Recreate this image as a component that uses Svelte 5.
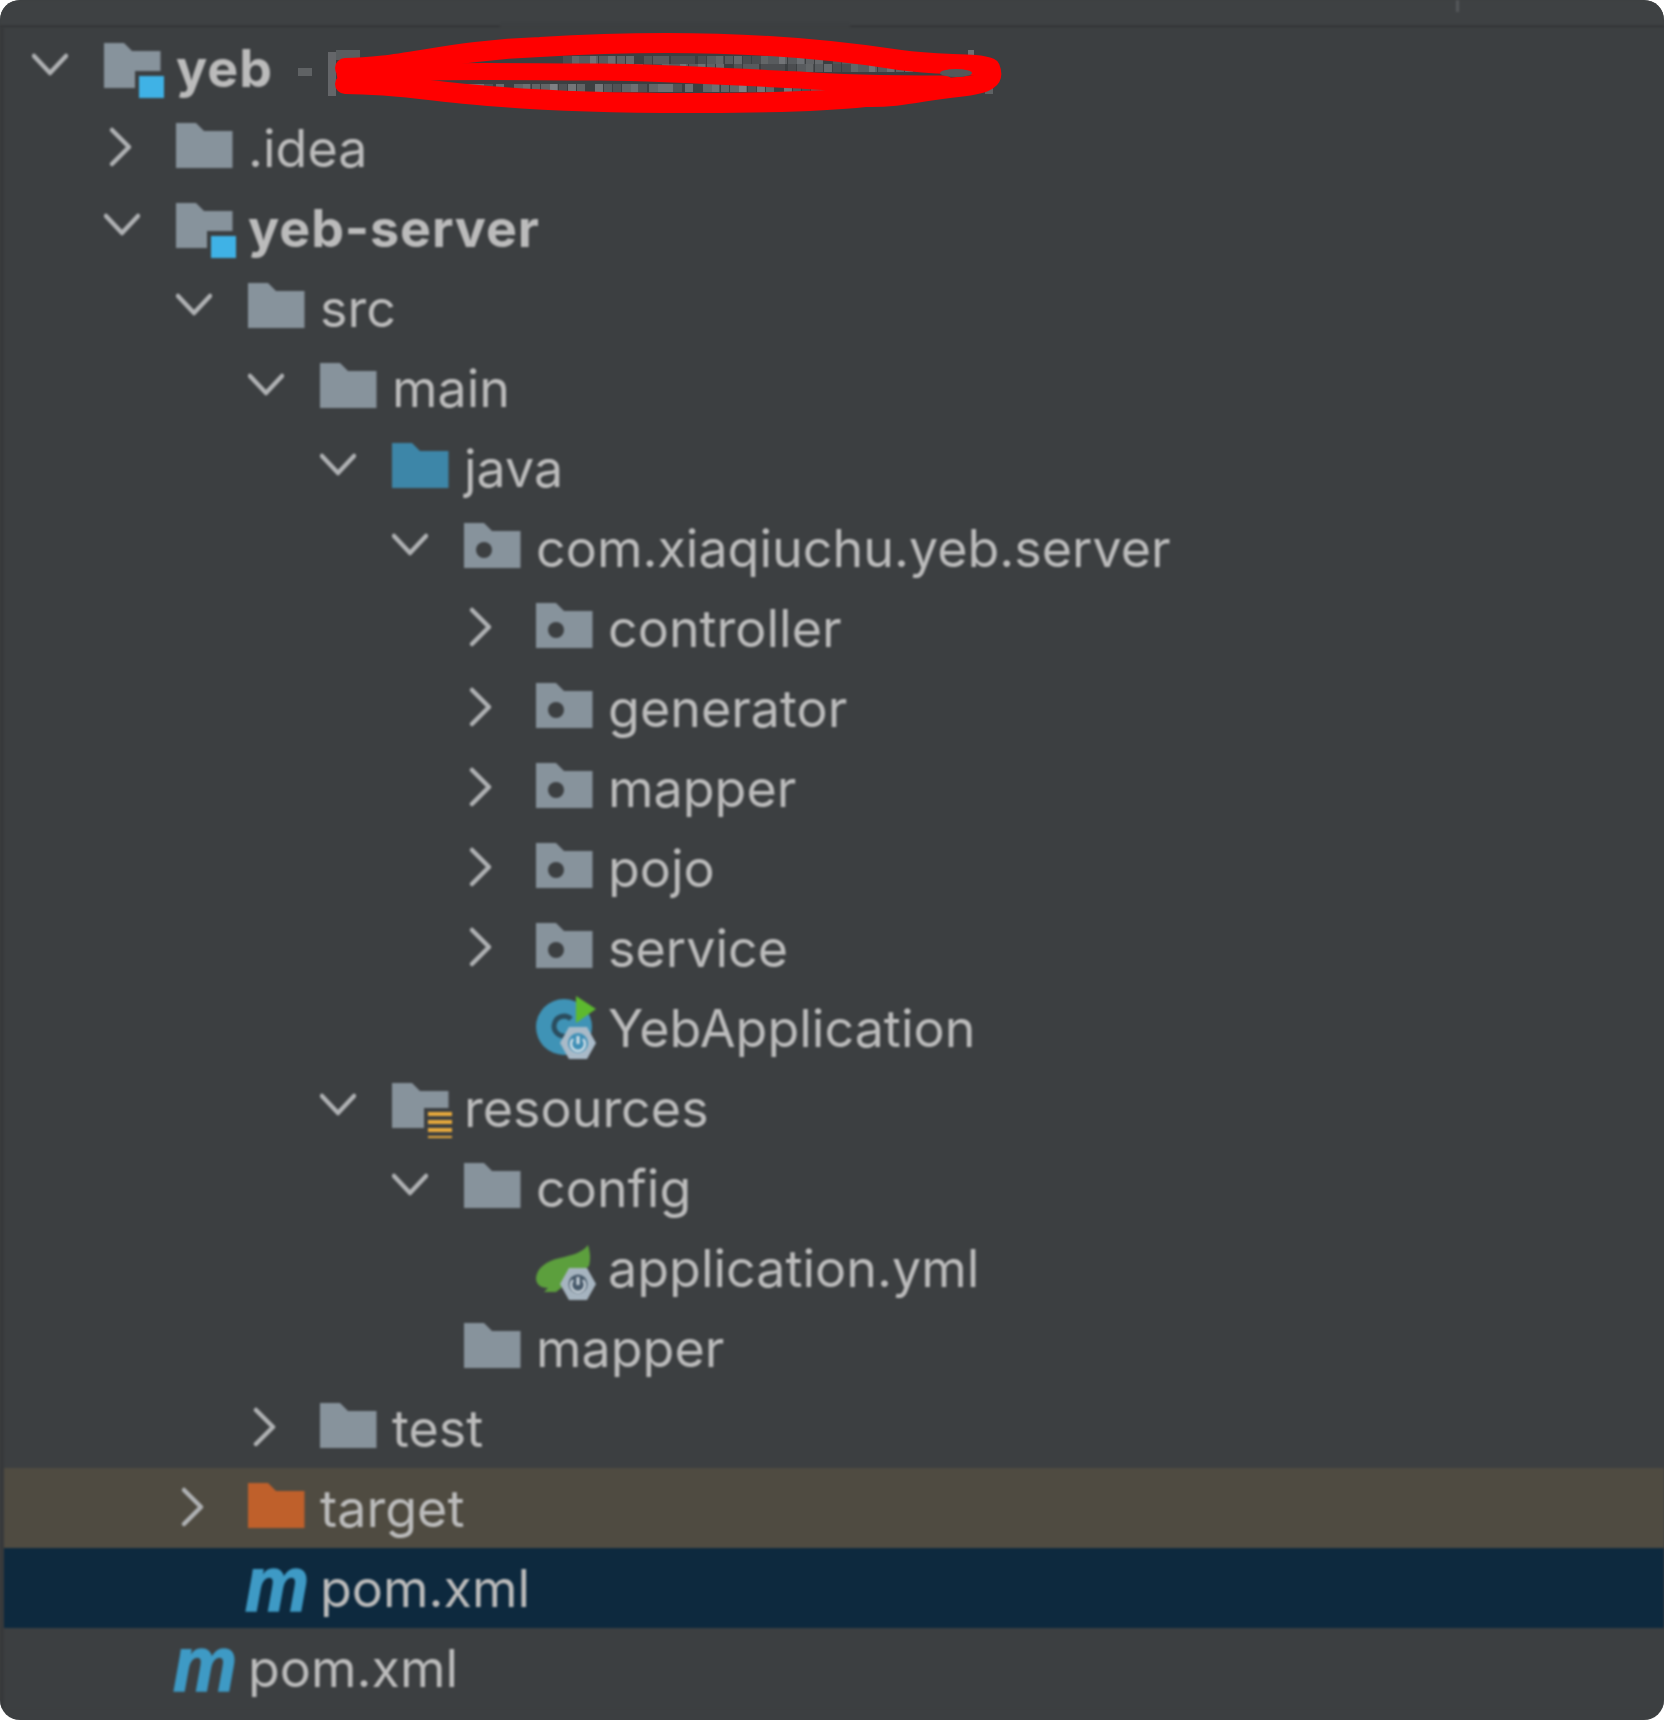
<script>
  const rows = [
    { label: 'yeb', level: 0, chev: 'down', icon: 'module', bold: true },
    { label: '.idea', level: 1, chev: 'right', icon: 'folder' },
    { label: 'yeb-server', level: 1, chev: 'down', icon: 'module', bold: true },
    { label: 'src', level: 2, chev: 'down', icon: 'folder' },
    { label: 'main', level: 3, chev: 'down', icon: 'folder' },
    { label: 'java', level: 4, chev: 'down', icon: 'java' },
    { label: 'com.xiaqiuchu.yeb.server', level: 5, chev: 'down', icon: 'package' },
    { label: 'controller', level: 6, chev: 'right', icon: 'package' },
    { label: 'generator', level: 6, chev: 'right', icon: 'package' },
    { label: 'mapper', level: 6, chev: 'right', icon: 'package' },
    { label: 'pojo', level: 6, chev: 'right', icon: 'package' },
    { label: 'service', level: 6, chev: 'right', icon: 'package' },
    { label: 'YebApplication', level: 6, icon: 'boot' },
    { label: 'resources', level: 4, chev: 'down', icon: 'resources' },
    { label: 'config', level: 5, chev: 'down', icon: 'folder' },
    { label: 'application.yml', level: 6, icon: 'yaml' },
    { label: 'mapper', level: 5, icon: 'folder' },
    { label: 'test', level: 3, chev: 'right', icon: 'folder' },
    { label: 'target', level: 2, chev: 'right', icon: 'target', tone: 'excluded' },
    { label: 'pom.xml', level: 2, icon: 'maven', tone: 'selected' },
    { label: 'pom.xml', level: 1, icon: 'maven' }
  ];

  const blocks = [
    { x: 298, y: 68, w: 14, h: 8, o: 0.35 },
    { x: 328, y: 52, w: 8, h: 44, o: 0.4 },
    { x: 336, y: 50, w: 24, h: 10, o: 0.3 },
    { x: 905, y: 52, w: 10, h: 8, o: 0.3 },
    { x: 968, y: 50, w: 6, h: 8, o: 0.5 },
    { x: 985, y: 86, w: 8, h: 8, o: 0.35 },
    { x: 915, y: 94, w: 10, h: 6, o: 0.3 }
  ];
  const widths = [8, 8, 8, 16, 8, 24, 8, 16, 8, 8, 16, 8];
  let seed = 7;
  function next() {
    seed = (seed * 73 + 41) % 211;
    return seed;
  }
  for (let x = 563; x < 938; x += 9) {
    for (const y of [56, 64]) {
      const n = next();
      if (n % 3 !== 0) {
        blocks.push({ x, y, w: widths[n % widths.length], h: 8, o: 0.15 + (n % 5) * 0.07 });
      }
    }
  }
  for (let x = 442; x < 837; x += 9) {
    const n = next();
    if (n % 3 !== 0) {
      blocks.push({ x, y: 84, w: widths[n % widths.length], h: 8, o: 0.2 + (n % 5) * 0.09 });
    }
  }
  const folder = 'M0 5H20L28 13H56.500V50H0Z';
</script>

<div class="window">
  <div class="titlebar"><span class="tick"></span><span class="bump"></span></div>
  <div class="tree">
    {#each rows as row}
      <div class="row {row.tone ?? ''}" style="padding-left: {28 + row.level * 72}px">
        <span class="chevron">
          {#if row.chev === 'down'}
            <svg width="36" height="60" viewBox="0 0 36 60"><path d="M2 18L18 35L34 18" /></svg>
          {:else if row.chev === 'right'}
            <svg width="36" height="60" viewBox="0 0 36 60"><path d="M8 12L25 29L8 46" /></svg>
          {/if}
        </span>
        <span class="icon">
          {#if row.icon === 'folder'}
            <svg width="60" height="60" viewBox="0 0 60 60"><path d={folder} fill="#87939c" /></svg>
          {:else if row.icon === 'java'}
            <svg width="60" height="60" viewBox="0 0 60 60"><path d={folder} fill="#3d86a8" /></svg>
          {:else if row.icon === 'target'}
            <svg width="60" height="60" viewBox="0 0 60 60"><path d={folder} fill="#bf602b" /></svg>
          {:else if row.icon === 'package'}
            <svg width="60" height="60" viewBox="0 0 60 60">
              <path d={folder} fill="#87939c" /><circle cx="20" cy="32" r="8" fill="#3c3f41" />
            </svg>
          {:else if row.icon === 'module'}
            <svg width="60" height="60" viewBox="0 0 60 60">
              <path d="M0 5H20L28 13H56.500V33H31V50H0Z" fill="#87939c" />
              <rect x="35" y="38" width="25" height="24" fill="#3fb2e6" />
            </svg>
          {:else if row.icon === 'resources'}
            <svg width="60" height="60" viewBox="0 0 60 60">
              <path d="M0 5H20L28 13H56.500V30H32V50H0Z" fill="#87939c" />
              <path d="M36 36H60M36 44H60M36 52H60M36 60H60" stroke="#e8aa3c" stroke-width="4" />
            </svg>
          {:else if row.icon === 'boot'}
            <svg class="free" width="60" height="60" viewBox="0 0 60 60">
              <circle cx="28" cy="29" r="28" fill="#3f93b6" />
              <path d="M35 21A10 10 0 1 0 30 38" fill="none" stroke="#2b4d5e" stroke-width="5" />
              <path d="M40 -2L60 11L40 25Z" fill="#5db92f" />
              <path d="M33 29L51 29L60 45L51 61L33 61L24 45Z" fill="#a9bac8" />
              <circle cx="42" cy="45" r="10" fill="#3f8fb6" />
              <path d="M42 38V46" stroke="#d4e0e8" stroke-width="3" />
              <path d="M37 41A7 7 0 1 0 47 41" fill="none" stroke="#d4e0e8" stroke-width="2.500" />
            </svg>
          {:else if row.icon === 'yaml'}
            <svg class="free" width="60" height="60" viewBox="0 0 60 60">
              <path d="M52 7C54 14 55 20 53 28L20 54L8 54L12 50C4 50 0 46 0 40C1 30 10 23 24 20C36 17 46 15 52 7Z" fill="#5c9f3d" />
              <path d="M33 30L51 30L60 46L51 62L33 62L24 46Z" fill="#a6b4c0" />
              <circle cx="42" cy="46" r="9.500" fill="#47596a" />
              <path d="M42 39V47" stroke="#c8d2da" stroke-width="3" />
              <path d="M37 42A7 7 0 1 0 47 42" fill="none" stroke="#c8d2da" stroke-width="2.500" />
            </svg>
          {:else if row.icon === 'maven'}
            <span class="maven">m</span>
          {/if}
        </span>
        <span class="label" class:bold={row.bold}>{row.label}</span>
      </div>
    {/each}
  </div>

  <svg class="redaction" width="1664" height="130" viewBox="0 0 1664 130">
    {#each blocks as b}
      <rect x={b.x} y={b.y} width={b.w} height={b.h} fill="#a0a2a5" opacity={b.o} />
    {/each}
    <path
      d="M345 68C400 68 450 50 540 47C620 42 760 38 900 60C940 66 975 62 990 68C994 78 990 84 958 87C925 90 900 98 865 97C800 104 620 106 502 97C440 93 400 84 345 84"
      fill="none"
      stroke="#ff0000"
      stroke-width="20"
      stroke-linejoin="round"
      stroke-linecap="round"
    />
    <path
      d="M345 74C420 70 520 72 600 72C680 73 750 78 800 80C850 84 900 84 945 84"
      fill="none"
      stroke="#ff0000"
      stroke-width="17"
      stroke-linecap="round"
    />
    <ellipse cx="956" cy="73" rx="16" ry="4" fill="#55585a" />
  </svg>
</div>

<style>
  :global(body) {
    margin: 0;
    background: #ffffff;
  }
  .window {
    position: relative;
    width: 1664px;
    height: 1720px;
    background: #3c3f41;
    border-radius: 20px;
    overflow: hidden;
  }
  .titlebar {
    position: relative;
    height: 28px;
    box-sizing: border-box;
    background: #3e4143;
    border-bottom: 3px solid #353739;
    filter: blur(0.8px);
  }
  .tick {
    position: absolute;
    left: 1456px;
    top: 0;
    width: 3px;
    height: 12px;
    background: #54575a;
  }
  .bump {
    position: absolute;
    left: 500px;
    top: 22px;
    width: 350px;
    height: 6px;
    background: #3c3f41;
  }
  .tree {
    padding-left: 4px;
    background: #37393b;
    filter: blur(0.8px);
  }
  .row {
    display: flex;
    align-items: center;
    height: 80px;
    box-sizing: border-box;
    background: #3c3f41;
    color: #bbbbbb;
    font-family: Inter, "Liberation Sans", sans-serif;
    font-size: 52px;
    white-space: nowrap;
  }
  .row.excluded {
    background: #4f4b41;
  }
  .row.selected {
    background: #0d293e;
  }
  .chevron {
    flex: none;
    width: 36px;
    height: 60px;
    margin-right: 36px;
  }
  .chevron path {
    fill: none;
    stroke: #afb1b3;
    stroke-width: 4.5;
    stroke-linecap: round;
    stroke-linejoin: round;
  }
  .icon {
    flex: none;
    position: relative;
    width: 60px;
    height: 60px;
    margin-right: 12px;
  }
  svg {
    display: block;
  }
  .free {
    overflow: visible;
  }
  .maven {
    position: absolute;
    left: -3px;
    top: -24px;
    font-family: "Liberation Sans", sans-serif;
    font-weight: 700;
    font-style: italic;
    font-size: 78px;
    line-height: 100px;
    color: #3e9ac5;
    -webkit-text-stroke: 1.5px #3e9ac5;
    transform: scaleX(0.92);
    transform-origin: left center;
  }
  .bold {
    font-weight: 700;
    letter-spacing: 0.9px;
  }
  .redaction {
    position: absolute;
    left: 0;
    top: 0;
  }
</style>
